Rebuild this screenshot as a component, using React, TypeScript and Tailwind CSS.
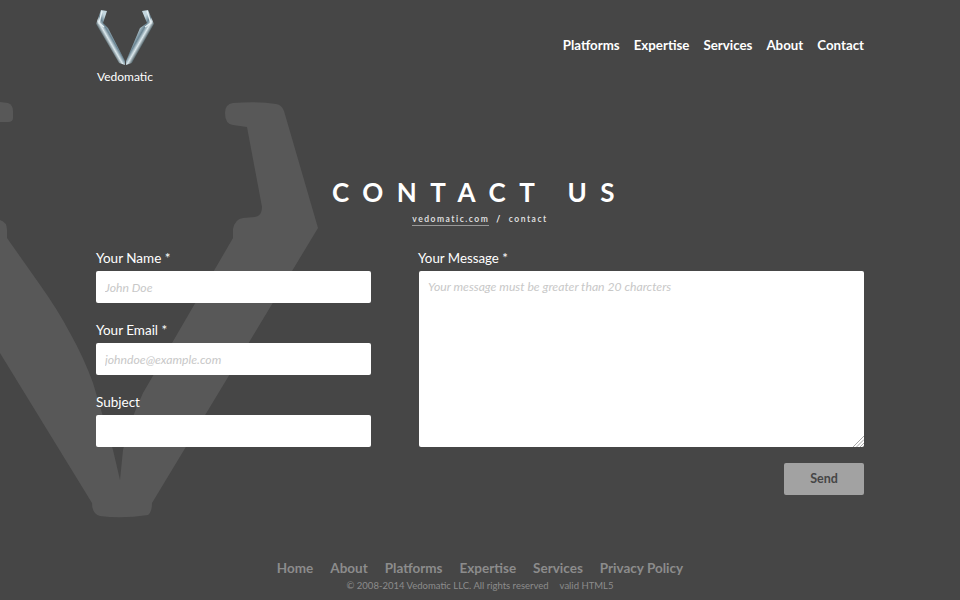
const font = "font-['Lato',sans-serif]";

function Watermark() {
  return (
    <svg className="absolute left-0 top-0 pointer-events-none" width="330" height="530" viewBox="0 0 330 530" fill="#585858">
      <path d="M0 102 L8 103 Q13 105 13 111 L13 118 Q13 122 8 122 L0 122 Z" />
      <path d="M225 113 Q225 104 233 103 Q258 101 276 104 Q282 105 284 111 L318 228 L152 503 Q152 512 148 515 Q122 519 100 516 Q92 514 92 503 L0 353 L0 220 Q7 222 7 230 L7 238 L38 282 Q58 310 70 333 Q84 358 93 383 L113 450 L120 480 L123 450 Q130 420 143 393 L233 238 L233 229 Q235 219 243 218 L255 217 Q262 216 262 207 L247 127 L233 125 Q225 124 225 113 Z" />
    </svg>
  );
}

function Logo() {
  return (
    <svg width="58" height="62" viewBox="0 0 58 62">
      <defs>
        <linearGradient id="steelLeft" gradientUnits="userSpaceOnUse" x1="6" y1="36" x2="20" y2="28">
          <stop offset="0" stopColor="#a9c2ce" />
          <stop offset="0.25" stopColor="#39494f" />
          <stop offset="0.5" stopColor="#dce9ee" />
          <stop offset="0.7" stopColor="#6a8492" />
          <stop offset="1" stopColor="#c3d6de" />
        </linearGradient>
        <linearGradient id="steelRight" gradientUnits="userSpaceOnUse" x1="52" y1="36" x2="38" y2="28">
          <stop offset="0" stopColor="#a9c2ce" />
          <stop offset="0.25" stopColor="#39494f" />
          <stop offset="0.5" stopColor="#dce9ee" />
          <stop offset="0.7" stopColor="#6a8492" />
          <stop offset="1" stopColor="#c3d6de" />
        </linearGradient>
      </defs>
      <path d="M5 2 L11 3 L7 15 L12 20 L29 53 L29 57 L23 55 L0 16 Z" fill="url(#steelLeft)" />
      <path d="M52 2 L46 3 L51 15 L44 20 L30 53 L30 57 L36 55 L58 16 Z" fill="url(#steelRight)" />
      <path d="M6 3 L3 15 L8 19" fill="none" stroke="#e6f0f4" strokeWidth="1.4" />
      <path d="M51 3 L55 15 L49 19" fill="none" stroke="#e6f0f4" strokeWidth="1.4" />
    </svg>
  );
}

function Field({ label, placeholder }: { label: string; placeholder?: string }) {
  return (
    <div className="mb-[15px]">
      <label className="block text-[13.5px] leading-[24px] text-white mb-[1px]">{label}</label>
      <input
        placeholder={placeholder}
        className="block w-full h-[32px] bg-white rounded-[2px] px-[9px] text-[12.2px] italic text-gray-700 placeholder:text-[#c8c8c8] outline-none"
      />
    </div>
  );
}

export default function App() {
  return (
    <div className={`relative h-[600px] overflow-hidden bg-[#464646] ${font}`}>
      <Watermark />
      <div className="relative w-[768px] mx-auto">
        {/* Header */}
        <header className="flex items-start justify-between h-[174px]">
          <div className="w-[58px] pt-[8px] flex flex-col items-center">
            <Logo />
            <span className="text-[12px] leading-[14px] text-white whitespace-nowrap">Vedomatic</span>
          </div>
          <nav className="flex gap-[14px] pt-[35px] text-[13.3px] leading-[20px] font-bold text-white">
            <a>Platforms</a>
            <a>Expertise</a>
            <a>Services</a>
            <a>About</a>
            <a>Contact</a>
          </nav>
        </header>

        {/* Title */}
        <div className="text-center h-[72px]">
          <h1 className="text-[26px] leading-[36px] font-bold text-white tracking-[13.5px]">CONTACT US</h1>
          <p className="text-[8.5px] leading-[14px] font-bold tracking-[1.5px] text-[#dddddd] mt-[2px]">
            <a className="border-b border-[#999999] pb-[1px]">vedomatic.com</a>
            <span className="text-white mx-[7px]">/</span>
            <span>contact</span>
          </p>
        </div>

        {/* Form */}
        <form className="flex gap-[48px]">
          <div className="w-[275px]">
            <Field label="Your Name *" placeholder="John Doe" />
            <Field label="Your Email *" placeholder="johndoe@example.com" />
            <Field label="Subject" />
          </div>
          <div className="w-[445px]">
            <label className="block text-[13.3px] leading-[24px] text-white mb-[1px] -ml-[1px]">Your Message *</label>
            <div className="relative">
              <textarea
                placeholder="Your message must be greater than 20 charcters"
                className="block w-full h-[176px] resize-none bg-white rounded-[2px] px-[9px] py-[7px] text-[12.2px] italic text-gray-700 placeholder:text-[#c8c8c8] outline-none"
              />
              <svg className="absolute right-0 bottom-0" width="11" height="11" viewBox="0 0 11 11" stroke="#a8a8a8" strokeWidth="1">
                <path d="M0 11 L11 0" />
                <path d="M3.5 11 L11 3.5" />
                <path d="M7 11 L11 7" />
              </svg>
            </div>
            <div className="flex justify-end mt-[16px]">
              <button type="button" className="w-[80px] h-[32px] bg-[#a2a2a2] rounded-[2px] text-[12.5px] font-bold text-[#464646]">Send</button>
            </div>
          </div>
        </form>

        {/* Footer */}
        <footer className="absolute top-[558px] left-0 right-0 text-center">
          <div className="flex justify-center gap-[17px] text-[13.5px] leading-[20px] font-bold text-[#8c8c8c]">
            <a>Home</a>
            <a>About</a>
            <a>Platforms</a>
            <a>Expertise</a>
            <a>Services</a>
            <a>Privacy Policy</a>
          </div>
          <div className="flex justify-center gap-[11px] text-[9.5px] leading-[14px] mt-[1px] text-[#8c8c8c]">
            <span>© 2008-2014 Vedomatic LLC. All rights reserved</span>
            <span>valid HTML5</span>
          </div>
        </footer>
      </div>
    </div>
  );
}
